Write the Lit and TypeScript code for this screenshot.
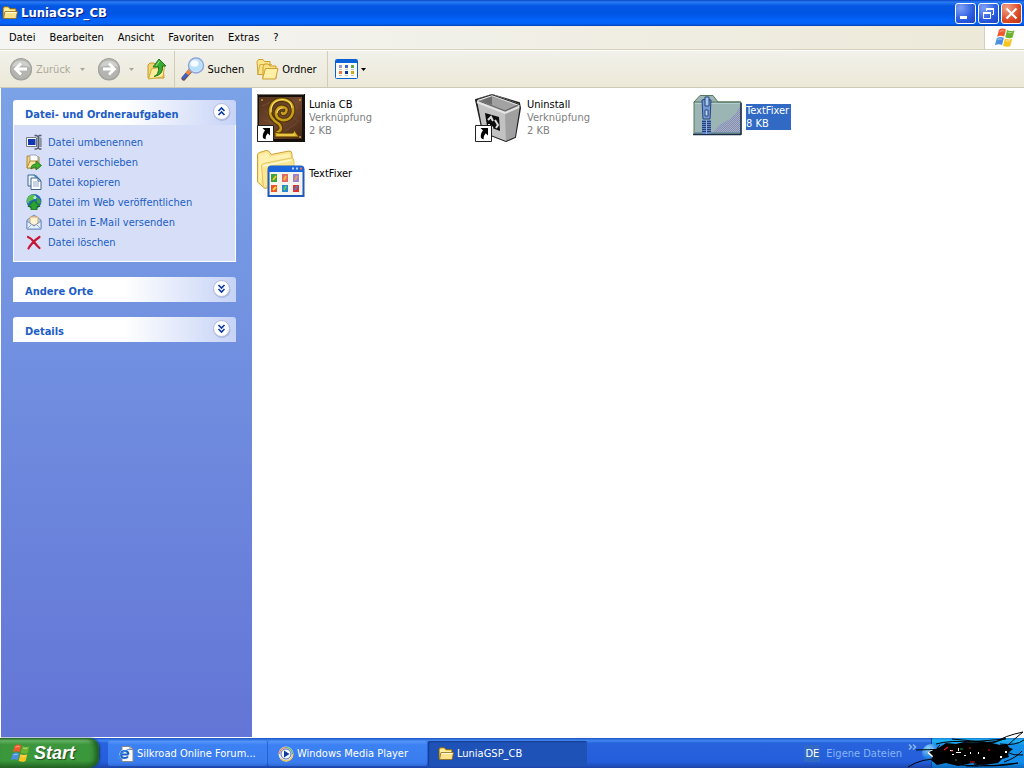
import { LitElement, html, css, svg, nothing } from "lit";
import { customElement, property, state } from "lit/decorators.js";
import { classMap } from "lit/directives/class-map.js";

const pic = (w: number, h: number, body: unknown, vb = `0 0 ${w} ${h}`) =>
  html`<svg width=${w} height=${h} viewBox=${vb} aria-hidden="true">${body}</svg>`;

const folder = () => pic(16, 16, svg`
  <path d="M1 3.500q0-2 2-2h3l2 2h5q1 0 1 1V13H1z" fill="#f0c850" stroke="#7d5f18" stroke-width=".8"/>
  <path d="M2 4.500q0-1.500 1.500-1.500H6l2 2h5v2H2z" fill="#fff0a0"/>
  <path d="M3 6.500h12.500L14 13.500H1.500z" fill="#fbe18a" stroke="#8f6c1c" stroke-width=".8"/>
  <path d="M3.500 7.500h11" stroke="#fffbe0"/>`);

const flag = (s: number) => pic(s, s, svg`
  <path d="M4.500 2.500q3-2 6.300-.3L9.200 8.700q-3-1.600-6.400.2z" fill="#f0592a"/>
  <path d="M11.800 2.800q3 1.800 6.700.1l-1.700 6.500q-3.400 1.600-6.600-.1z" fill="#6ab52d"/>
  <path d="M2.500 10.100q3.300-1.900 6.400-.2l-1.600 6.400q-3.200-1.700-6.500.2z" fill="#4a8fe0"/>
  <path d="M9.900 10.500q3.200 1.700 6.600.1l-1.700 6.500q-3.300 1.700-6.600-.2z" fill="#f8c520"/>
  <path d="M5.200 4q2-1 4-.4M12.400 4.700q2 .8 4.100.1M3.300 11.400q2-1 4-.4M10.600 12.100q2 .8 4 .1" stroke="#fff" stroke-opacity=".45" fill="none"/>`, "0 0 19 19");

const arrowDisc = (dir: "l" | "r") => pic(24, 24, svg`
  <circle cx="12" cy="12.500" r="11" fill="#9c9c98"/>
  <circle cx="12" cy="12" r="10.500" fill="#b4b4b0" stroke="#a3a39f"/>
  <path d="M3 10a9.500 9.500 0 0 1 18 0q-9-3-18 0z" fill="#cfcfcc"/>
  <path d=${dir === "l" ? "M12 6.500L6.500 12l5.500 5.500M7 12h11" : "M12 6.500l5.500 5.500-5.500 5.500M17 12H6"}
    fill="none" stroke="#fff" stroke-width="2.800"/>`);

const caret = () => pic(5, 3, svg`<path d="M0 0h5L2.500 3z" fill="currentColor"/>`);

const upFolder = () => pic(20, 22, svg`
  <path d="M1 7l2-2h4l2 2h7l1 13H1z" fill="#f3d473" stroke="#c69a2c"/>
  <path d="M1.500 21l3-10 13-3-1.500 11z" fill="#fdeb9c" stroke="#d2a93a"/>
  <path d="M7 18.500q5-1.500 4.500-9.500H6L12 1l7 7h-3.500q1 9-8.500 10.500z" fill="#3aa935" stroke="#1d7a20"/>
  <path d="M9 8l3.500-5" stroke="#9be48a" fill="none"/>`);

const magnifier = () => pic(24, 24, svg`
  <path d="M2.500 21.500l7-8" stroke="#7e4a3c" stroke-width="4.200" stroke-linecap="round"/>
  <path d="M2.500 21l6-7" stroke="#3b63c8" stroke-width="3" stroke-linecap="round"/>
  <path d="M6 17l3.500-4" stroke="#f08a3c" stroke-width="3.500"/>
  <circle cx="15" cy="8.500" r="7.500" fill="#cfeafc" stroke="#8fa6dc" stroke-width="1.500"/>
  <circle cx="15" cy="8.500" r="6" fill="#b9e0fb"/>
  <ellipse cx="13.500" cy="6.500" rx="4" ry="3.300" fill="#fff" opacity=".85"/>`);

const folders = () => pic(23, 22, svg`
  <path d="M1 3.500l1.500-2H7l1.500 2H14v13H2z" fill="#fbe48a" stroke="#cf9f2f"/>
  <path d="M1.500 17L4 6.500h12" fill="none" stroke="#d8ae3f"/>
  <path d="M7 8.500L8.500 6H12l2 2h6v12.500H7z" fill="#fae07e" stroke="#cf9f2f"/>
  <path d="M6.500 21l3-10.500h12.500L19.500 21z" fill="#fff0a6" stroke="#cf9f2f"/>`);

const viewsIcon = () => pic(23, 20, svg`
  <rect x=".5" y=".5" width="22" height="19" rx="1" fill="#fffdf3" stroke="#0a5fd0"/>
  <path d="M1 1h21v3H1z" fill="#0c62d9"/>
  <path d="M4 6h3v3H4z" fill="#9b95c9"/><path d="M10 6h3v3h-3z" fill="#3167cf"/><path d="M16 6h3v3h-3z" fill="#5aa85a"/>
  <path d="M4 12h3v3H4z" fill="#ee7351"/><path d="M10 12h3v3h-3z" fill="#12329b"/><path d="M16 12h3v3h-3z" fill="#d0a41c"/>
  <path d="M4 16.500h3M10 16.500h3M16 16.500h3M4 10.500h3M10 10.500h3M16 10.500h3" stroke="#c4c4cc"/>`);

const taskIcons = {
  rename: () => pic(16, 16, svg`
    <path d="M.5 3.500h10v9H.5z" fill="#fff" stroke="#747b8c"/><path d="M2 5h7.500v6H2z" fill="#1238ae"/>
    <path d="M10 3h5v10h-5z" fill="#aab0bd"/>
    <path d="M8.500 1.500h2l1.500 1 1.500-1h2M12.500 2.500v11M8.500 15h2l1.500-1 1.500 1h2" fill="none" stroke="#555e70" stroke-width="1.500"/>
    <path d="M15 4v9M10.500 4v9" stroke="#6b7385"/>`),
  move: () => pic(16, 16, svg`
    <path d="M1 2h4l1 1h7v11H1z" fill="#f0cf74" stroke="#b38a35"/><path d="M4 1h6l2 2v7H4z" fill="#fff" stroke="#9aa4bb"/>
    <path d="M1 14l3-7h8l-2 7z" fill="#fbe6a0" stroke="#b38a35"/>
    <path d="M5 15q0-5 5-5V7l5.500 4.500L10 16v-3q-3 0-5 2z" fill="#3fae2e" stroke="#1c6e1c" stroke-width=".8"/>`),
  copy: () => pic(16, 16, svg`
    <path d="M2 1h7l3 3v8H2z" fill="#e9f3fc" stroke="#41648c"/><path d="M7 1h3l5 5h-3z" fill="#3f86b4"/>
    <path d="M5 4h7l3 3v8.500H5z" fill="#fff" stroke="#41648c"/>
    <path d="M7 8h6M7 10h6M7 12h6" stroke="#90a9cb"/><path d="M12 4v3h3" fill="none" stroke="#41648c"/>`),
  web: () => pic(16, 16, svg`
    <circle cx="8" cy="7.500" r="7.500" fill="#2069c4"/><path d="M3 2q5-3 7 0 0 3-4 4-3 1-4 4-3-4 1-8z" fill="#5bbf4a"/>
    <path d="M11 3q4 2 4 6l-3 1q-2-2-1-7z" fill="#3ea13c"/><circle cx="9" cy="3.500" r="1.500" fill="#bff0e4"/>
    <path d="M8 6.500l6 6h-3V16H5v-3.500H2z" fill="#2ba32e" stroke="#126316" stroke-width=".8"/>`),
  mail: () => pic(16, 16, svg`
    <path d="M1 6l7-5 7 5v9H1z" fill="#b8cdec" stroke="#6f8fc0"/><path d="M4 3h8v8H4z" fill="#fff4d6" stroke="#d8a75b"/>
    <path d="M1 7l7 5 7-5v8H1z" fill="#e6effb" stroke="#6f8fc0"/><path d="M1 15l5-5M15 15l-5-5" stroke="#8ba7d3"/>`),
  del: () => pic(16, 16, svg`
    <path d="M2 3Q5 4 8 8t5.500 6M13.500 3Q9 6 6 9.500T2.500 14.500" fill="none" stroke="#c81432" stroke-width="2.200" stroke-linecap="round"/>`),
};

const shortcut = () => svg`
  <path d="M.5 31.500h16v16H.5z" fill="#fff" stroke="#222"/>
  <path d="M5.500 34H13v7.500l-2.300-2.300Q8 42 8.500 45.500L6 44q-1-4 2-7.500z" fill="#000"/>`;

const fileIcons = {
  lunia: () => pic(48, 48, svg`
    <defs><linearGradient id="wood" x2="1" y2="1"><stop offset="0" stop-color="#54321c"/><stop offset=".5" stop-color="#74492e"/><stop offset="1" stop-color="#442717"/></linearGradient></defs>
    <path d="M0 0h48v48H0z" fill="#17100a"/><path d="M.5 47V.5H47" stroke="#777" fill="none"/><path d="M2 3h43v42H2z" fill="url(#wood)"/>
    <path d="M5 12l9-4m16 0l11 6M7 26l10 3m19-6l6 5M28 37l12-8M8 17l6 5" stroke="#87603e" opacity=".5"/>
    <g fill="none" stroke-linecap="round">
      <path d="M19 39q8-3 3-9Q12 24 13 16 15 5 26 5.500 37 7 36 18q-2 9-11 8-7-2-6-8 2-6 7-5 5 1 3 5-2 3-4 1" stroke="#4c3304" stroke-width="4.600"/>
      <path d="M19 39q8-3 3-9Q12 24 13 16 15 5 26 5.500 37 7 36 18q-2 9-11 8-7-2-6-8 2-6 7-5 5 1 3 5-2 3-4 1" stroke="#c89c18" stroke-width="2.600"/>
      <path d="M14 18Q14 6 26 5.500q8 1 9 8M20 19q1-5 6-5" stroke="#f7e26a" stroke-width="1.200"/>
    </g>
    <path d="M18 38l4 1h14l1-3 5 7H18z" fill="#d8ae22" stroke="#5a3d04"/><path d="M20 41h18" stroke="#f7e26a"/>
    <circle cx="5" cy="6" r="1" fill="#c79a55"/><circle cx="43" cy="6" r="1" fill="#c79a55"/><circle cx="43" cy="43" r="1" fill="#c79a55"/>
    ${shortcut()}`),
  bin: () => pic(48, 48, svg`
    <path d="M1 6l16-5 27 8 1 5-5 29-9 4-23-9z" fill="#b4b4b4" stroke="#222" stroke-width="2"/>
    <path d="M2 6l15-5 28 10-15 6z" fill="#8a8a8a"/>
    <path d="M6 7l11-5v9z" fill="#6d6d6d"/><path d="M17 2v9l13 5 12-5z" fill="#a2a2a2"/>
    <path d="M2 6l28 11 1 30-23-9z" fill="#c2c2c2"/><path d="M30 17l15-6-5 32-9 4z" fill="#a0a0a0"/>
    <path d="M2 8l28 11 14-6M3 6l14-5 27 10" stroke="#e4e4e4" stroke-width="2" fill="none"/>
    <path d="M4 7l26 10 13-6" stroke="#444" stroke-width=".7" fill="none"/>
    <path d="M2 5.500L17 .7l28 10" stroke="#222" fill="none"/>
    <path d="M10 19l14 4 1 14-13-5z" fill="#0c0c0c"/>
    <path d="M13 26l3-3 2 4m2-1l3 5-2 3m-7-4v2l4 2" fill="none" stroke="#ddd" stroke-width="2"/>
    ${shortcut()}`),
  zip: () => pic(49, 44, svg`
    <defs><pattern id="dots" width="2" height="2" patternUnits="userSpaceOnUse"><path d="M0 0h1v1H0zM1 1h1v1H1z" fill="#9088c4"/></pattern></defs>
    <path d="M1 8l6-6.500h13L25 8h23v32H1z" fill="#9ab5b4" stroke="#587a60"/>
    <path d="M1 8h47" stroke="#54795b"/><path d="M2 9.500h45" stroke="#b4cdd4"/>
    <path d="M47 12v27H20q4-8 12-11 10-5 15-16z" fill="url(#dots)"/>
    <path d="M0 40.500h48M48 9v32" stroke="#1b2c48" stroke-width="1.500"/><path d="M2 38.500h45" stroke="#7290a8"/>
    <path d="M9 26h9v14H9z" fill="#6486c2"/><path d="M9 27.500h9M9 29.500h9M9 31.500h9M9 33.500h9M9 35.500h9M9 37.500h9" stroke="#23417b"/><path d="M13.500 26v14" stroke="#9ab5d9"/>
    <path d="M9 6q4-2 9 0l-1 19H10z" fill="#7699d4" stroke="#24447e"/>
    <path d="M12 3h4v9h-4z" fill="#a9c5ec" stroke="#24447e"/><path d="M12 16h3v6h-3z" fill="#c2daf0" stroke="#24447e"/>`),
  folder: () => pic(48, 48, svg`
    <path d="M.5 32V5q0-2 2-2.500L9 .5q2-.5 4 2l1 2 18-3.500q3 0 3 3V30L8 38.500z" fill="#fbe48c" stroke="#cfa238"/>
    <path d="M2 6q0-1.500 2-2l6-1.500 3 4 18-3q2.500 0 2.500 2.500v4L6 15 4 33l-2-1z" fill="#fff1b0"/>
    <path d="M6.500 38L4.500 16q0-2 2-2.500L34 8q3 0 3 3v22z" fill="#fce792" stroke="#e6c464"/>
    <path d="M6 16l28-6" stroke="#fffbd8" stroke-width="1.500"/>
    <path d="M11.500 19.500q0-3 3-3h29q3 0 3 3V46h-35z" fill="#f4f4ee" stroke="#1e58b8" stroke-width="2"/>
    <path d="M11 22v-3q0-3 3-3h30q3 0 3 3v3z" fill="#1c66dc"/><path d="M35 18.500h2M39 18.500h2" stroke="#bcd7ff" stroke-width="2"/><path d="M43 18.500h2" stroke="#ff6a42" stroke-width="2"/>
    <path d="M14 24h6v8h-6z" fill="#3ba33d"/><path d="M25 24h6v8h-6z" fill="#e26767"/><path d="M36 24h6v8h-6z" fill="#9a83cf"/>
    <path d="M14 35h6v7h-6z" fill="#f0502c"/><path d="M25 35h6v7h-6z" fill="#2c86d4"/><path d="M36 35h6v7h-6z" fill="#e03428"/>
    <path d="M16 30l3-4M27 30l2-4" stroke="#f4c52c" stroke-width="1.800"/><path d="M38 30l2-4" stroke="#f0a050" stroke-width="1.800"/>
    <path d="M16 40l3-3" stroke="#ffd83c" stroke-width="2"/><path d="M27 40l2-4" stroke="#5fd04c" stroke-width="2"/><path d="M38 40l2-4" stroke="#3c84e0" stroke-width="2"/>`),
};

const ieIcon = () => pic(16, 16, svg`
  <path d="M4 .5h8l3 3v12H4z" fill="#fff" stroke="#888"/><path d="M12 .5v3h3" fill="none" stroke="#888"/>
  <circle cx="6.500" cy="8.500" r="5" fill="#fff"/>
  <path d="M10.500 8.500H3q0 3.500 3.500 3.500 2.500 0 3.500-1.500M3 8.500Q3 5 6.700 5t3.800 3.500" fill="none" stroke="#1e5fc6" stroke-width="2"/>
  <path d="M1 13.500q-1-4 5-8 5-3 6-1.500" fill="none" stroke="#3a90e6" stroke-width="1.200"/>`);

const wmpIcon = () => pic(16, 16, svg`
  <circle cx="8" cy="8" r="7.500" fill="#e8eefa"/><path d="M8 1.500A6.500 6.500 0 0 1 14.500 8" stroke="#5bb04a" stroke-width="1.200" fill="none"/>
  <path d="M1.500 8A6.500 6.500 0 0 1 8 1.500" stroke="#ef7b34" stroke-width="1.200" fill="none"/><path d="M14.500 8A6.500 6.500 0 0 1 3 12.500" stroke="#f3c341" stroke-width="1.200" fill="none"/>
  <circle cx="8" cy="8" r="5" fill="#f4f8ff" stroke="#5472b4"/><path d="M6 4.500L11.500 8 6 11.500z" fill="#123c9c"/>`);

const chevrons = (up: boolean) => pic(19, 19, svg`
  <circle cx="10" cy="10.500" r="8.500" fill="#8b98ca" opacity=".5"/>
  <circle cx="9.500" cy="9.500" r="8" fill="#fff" stroke="#b3bbdc"/>
  <path d=${up ? "M6.500 9l3-3 3 3M6.500 13l3-3 3 3" : "M6.500 6l3 3 3-3M6.500 10l3 3 3-3"} fill="none" stroke="#0a3aa6" stroke-width="1.600"/>`);

const scribble = () => html`<svg class="ink" width="116" height="38" viewBox="0 0 116 38" aria-hidden="true">
  <path d="M32 17l6-4 10 1 8-2 14 1 10-1 12 3 6-1 4 4 3 1-5 4 1 4-7 2-4 4-14 2-12-2-14 3-12-3-9 2-6-5 2-4-4-4z" fill="#000"/>
  <path d="M0 37q14-9 32-8M8 20q18-1 36 0M28 14q14-4 38-2 22 2 32-4M115 2Q96 6 88 12q-10 2-22 1M115 2q-10 8-16 14M92 14q16 2 24-4M44 9q20 2 34 3M36 32q18 4 34 4M66 34q22 4 44-1M96 32q12-4 18-11M98 22q8 4 17 3M32 15q-6 4 2 8M30 29q6 4 18 4M60 12l38-3M110 33q-26 4-52 3"
    fill="none" stroke="#000"/>
  <path d="M42 20h3v1h-3zM44 24h2v1h-2zM48 22h5v1h-5zM50 18h1v3h-1zM56 25h2v1h-2zM70 22h1v2h-1zM97 21h2v2h-2zM92 26h2v2h-2zM75 27h2v2h-2zM62 22h1v2h-1z" fill="#fff"/>
  <path d="M36 20l4-3M43 21h2M61 18h2M62 32h5M80 20h2" stroke="#e81818" stroke-width="1.200"/>
  <path d="M47 30h2M52 19h3" stroke="#169a38"/>
</svg>`;

const minGlyph = () => pic(13, 13, svg`<path d="M1 9h7v3H1z" fill="#fff"/>`);
const restoreGlyph = () => pic(13, 13, svg`
  <path d="M4.500 4V1.500h7v6H10" fill="none" stroke="#fff"/><path d="M4 2h8" stroke="#fff" stroke-width="2"/>
  <path d="M1.500 6h7v5.500h-7z" fill="none" stroke="#fff"/><path d="M1 6h8" stroke="#fff" stroke-width="2"/>`);
const closeGlyph = () => pic(13, 13, svg`<path d="M1.500 1.500l10 10m0-10l-10 10" stroke="#fff" stroke-width="2.200"/>`);
const moreGlyph = () => pic(9, 6, svg`<path d="M1 .5L3.500 3 1 5.500M5 .5L7.500 3 5 5.500" fill="none" stroke="currentColor" stroke-width="1.500"/>`);
const leftGlyph = () => pic(8, 10, svg`<path d="M6.500 1L2 5l4.500 4" fill="none" stroke="#fff" stroke-width="2"/>`);

@customElement("task-box")
class TaskBox extends LitElement {
  @property() heading = "";
  @property({ type: Boolean }) open = false;
  static styles = css`
    :host { display: block; }
    * { box-sizing: border-box; }
    .head {
      display: flex; align-items: center; justify-content: space-between;
      width: 100%; height: 25px; margin: 0; padding: 0 5px 0 12px; border: 0;
      border-radius: 3px 3px 0 0; background: linear-gradient(90deg, #fff 50%, #c6d3f7);
      font: bold 11px/14px "DejaVu Sans Condensed", "DejaVu Sans", sans-serif; color: #215dc6; text-align: left;
    }
    .title { padding-top: 4px; }
    .body { padding: 9px 12px 11px; border: 1px solid #fff; border-top: 0; background: #d6dff7; }
    svg { display: block; margin-bottom: 2px; }
  `;
  render() {
    return html`<section>
      <button class="head" aria-expanded=${this.open ? "true" : "false"} @click=${() => (this.open = !this.open)}>
        <span class="title">${this.heading}</span>${chevrons(this.open)}
      </button>
      ${this.open ? html`<div class="body"><slot></slot></div>` : nothing}
    </section>`;
  }
}

interface Entry { name: string; kind?: string; size?: string; icon: () => unknown; }

@customElement("app-root")
class AppRoot extends LitElement {
  @state() private selected = 2;

  private entries: Entry[] = [
    { name: "Lunia CB", kind: "Verknüpfung", size: "2 KB", icon: fileIcons.lunia },
    { name: "Uninstall", kind: "Verknüpfung", size: "2 KB", icon: fileIcons.bin },
    { name: "TextFixer", size: "8 KB", icon: fileIcons.zip },
    { name: "TextFixer", icon: fileIcons.folder },
  ];
  private tasks: [string, () => unknown][] = [
    ["Datei umbenennen", taskIcons.rename],
    ["Datei verschieben", taskIcons.move],
    ["Datei kopieren", taskIcons.copy],
    ["Datei im Web veröffentlichen", taskIcons.web],
    ["Datei in E-Mail versenden", taskIcons.mail],
    ["Datei löschen", taskIcons.del],
  ];
  private windows: [string, () => unknown][] = [
    ["Silkroad Online Forum...", ieIcon],
    ["Windows Media Player", wmpIcon],
    ["LuniaGSP_CB", folder],
  ];

  static styles = css`
    :host {
      display: flex; flex-direction: column; height: 100vh; overflow: hidden; background: #fff;
      font: 11px/13px "DejaVu Sans Condensed", "DejaVu Sans", sans-serif; color: #000; cursor: default;
    }
    * { box-sizing: border-box; }
    svg { display: block; flex: none; }
    button { font: inherit; color: inherit; margin: 0; padding: 0; border: 0; background: none; white-space: nowrap; }
    .titlebar {
      display: flex; align-items: center; gap: 3px; flex: none; height: 26px; padding: 0 2px;
      background: linear-gradient(#0a46c8, #2a7cf4 8%, #0458e4 22%, #0054e3 50%, #0264fc 80%, #0262f5 92%, #0340b0);
    }
    .titlebar h1 {
      flex: 1; margin: 0; color: #fff; text-shadow: 1px 1px #0a1883;
      font: bold 13px/18px "DejaVu Sans Condensed", "DejaVu Sans", sans-serif;
    }
    .winbtns { display: flex; gap: 2px; }
    .winbtn {
      display: grid; place-items: center; width: 21px; height: 21px; border: 1px solid #fff; border-radius: 3px;
      background: radial-gradient(circle at 25% 20%, #7ea0f5, #2a5be0 60%, #1c44c0);
    }
    .winbtn.close { background: radial-gradient(circle at 25% 20%, #f0a088, #dc4a26 60%, #b8320f); }
    .menubar { display: flex; flex: none; height: 24px; background: linear-gradient(90deg, #f5f5f4, #ece9d8); }
    .menus { display: flex; flex: 1; padding: 0 2px; border-bottom: 1px solid #d8d2bd; }
    .menus button { padding: 0 7px 1px; }
    .brand { display: grid; place-items: center; width: 40px; border-left: 1px solid #d8d2bd; border-bottom: 1px solid #d8d2bd; background: #fff; }
    .toolbar {
      display: flex; align-items: center; flex: none; height: 38px; padding-left: 9px;
      background: linear-gradient(#f2f1ea, #ece9d8); border-bottom: 1px solid #cdc9b5; border-top: 1px solid #fff;
    }
    .tool { display: flex; align-items: center; gap: 3px; height: 36px; padding: 0 6px; }
    .back { padding: 0; }
    .back svg:last-child { margin-left: 6px; }
    .forward { gap: 8px; padding: 0 7px 0 12px; }
    .up { padding: 0 7px 0 6px; }
    .list { padding-right: 10px; }
    .views { padding: 0 7px; }
    .off { color: #aca899; }
    .sep { width: 1px; height: 36px; background: #d2cdb6; }
    .main { display: flex; flex: 1; min-height: 0; padding: 0 0 1px 1px; }
    .side {
      display: flex; flex-direction: column; gap: 15px; flex: none; width: 251px; padding: 12px 16px 12px 12px;
      background: linear-gradient(#7ba2e7, #6375d6);
    }
    .tasks { display: grid; gap: 4px; margin: 0; padding: 0; list-style: none; }
    .tasks a { display: flex; align-items: center; gap: 6px; height: 16px; color: #215dc6; text-decoration: none; white-space: nowrap; }
    .files {
      display: grid; flex: 1; align-content: start; grid-template-columns: repeat(auto-fill, 218px);
      grid-auto-rows: 48px; row-gap: 8px; padding: 6px 5px;
    }
    .file { display: flex; align-items: center; gap: 4px; text-align: left; }
    .file.on svg { align-self: flex-start; }
    .dim { color: #808080; }
    .label { display: flex; flex-direction: column; margin-bottom: 2px; padding-right: 2px; }
    .on .label, .on .dim { background: #316ac5; color: #fff; }
    .taskbar {
      display: flex; flex: none; height: 30px; color: #fff;
      background: linear-gradient(#1f4fc0, #3f86f0 8%, #2862dc 18%, #245edb 80%, #1c44a8);
    }
    .start {
      display: flex; align-items: center; gap: 4px; width: 99px; padding-left: 10px; border-radius: 0 10px 10px 0;
      background: linear-gradient(#2b6b2b, #6bb96b 8%, #3c963c 22%, #3a983a 75%, #276627);
      box-shadow: inset -4px 0 5px #1f5d20, 1px 0 2px #163a88;
      font: italic bold 18px/22px "Liberation Sans", sans-serif; text-shadow: 1px 1px 1px #1b4a1b;
    }
    .tabs { display: flex; flex: 1; gap: 1px; padding: 3px 0 2px 9px; }
    .tab {
      display: flex; align-items: center; gap: 3px; width: 159px; padding: 0 10px; border-radius: 2px;
      background: linear-gradient(#5a96f8, #3c81f3 15%, #3a7cee 85%, #2f6bd6);
    }
    .tab.active { background: #1e52b7; box-shadow: inset 1px 1px 1px #153c8c; }
    .lang { align-self: center; padding: 2px 1px; background: #316ac5; }
    .desk { align-self: center; margin: 0 6px; color: #86b6f7; }
    .more { align-self: flex-start; padding-top: 6px; color: #86b6f7; }
    .tray {
      position: relative; display: flex; align-items: center; width: 93px; margin-left: 14px;
      border-left: 1px solid #0c3f9c; background: linear-gradient(#1a7fd8, #20b4f4 8%, #1290e8 25%, #0f8dea 80%, #0c68b8);
    }
    .expand {
      display: grid; place-items: center; width: 18px; height: 18px; margin-left: -10px; border-radius: 50%;
      background: radial-gradient(circle at 35% 25%, #8fd4fb, #1273dd 60%, #0a4fb8);
    }
    .ink { position: absolute; right: 0; bottom: 0; pointer-events: none; }
  `;

  private file(e: Entry, i: number) {
    const on = i === this.selected;
    return html`<button class=${classMap({ file: true, on })} aria-pressed=${on ? "true" : "false"}
        @click=${() => (this.selected = i)}>
      ${e.icon()}
      <span class="label">
        <span>${e.name}</span>
        ${e.kind ? html`<span class="dim">${e.kind}</span>` : nothing}
        ${e.size ? html`<span class="dim">${e.size}</span>` : nothing}
      </span>
    </button>`;
  }

  render() {
    return html`
      <header class="titlebar">
        ${folder()}
        <h1>LuniaGSP_CB</h1>
        <div class="winbtns">
          <button class="winbtn" aria-label="Minimieren">${minGlyph()}</button>
          <button class="winbtn" aria-label="Wiederherstellen">${restoreGlyph()}</button>
          <button class="winbtn close" aria-label="Schließen">${closeGlyph()}</button>
        </div>
      </header>
      <div class="menubar">
        <nav class="menus" aria-label="Menü">
          ${["Datei", "Bearbeiten", "Ansicht", "Favoriten", "Extras", "?"].map((m) => html`<button>${m}</button>`)}
        </nav>
        <div class="brand">${flag(21)}</div>
      </div>
      <div class="toolbar" role="toolbar">
        <button class="tool back off" disabled>${arrowDisc("l")}<span>Zurück</span>${caret()}</button>
        <button class="tool forward off" disabled aria-label="Vorwärts">${arrowDisc("r")}${caret()}</button>
        <button class="tool up" aria-label="Aufwärts">${upFolder()}</button>
        <span class="sep"></span>
        <button class="tool">${magnifier()}<span>Suchen</span></button>
        <button class="tool list">${folders()}<span>Ordner</span></button>
        <span class="sep"></span>
        <button class="tool views" aria-label="Ansichten">${viewsIcon()}${caret()}</button>
      </div>
      <main class="main">
        <aside class="side">
          <task-box heading="Datei- und Ordneraufgaben" open>
            <ul class="tasks">
              ${this.tasks.map(([label, icon]) => html`<li><a href="#">${icon()}<span>${label}</span></a></li>`)}
            </ul>
          </task-box>
          <task-box heading="Andere Orte"></task-box>
          <task-box heading="Details"></task-box>
        </aside>
        <section class="files" aria-label="Dateien">${this.entries.map((e, i) => this.file(e, i))}</section>
      </main>
      <footer class="taskbar">
        <button class="start">${flag(20)}<span>Start</span></button>
        <div class="tabs">
          ${this.windows.map(([label, icon]) => html`
            <button class=${classMap({ tab: true, active: label === "LuniaGSP_CB" })}>${icon()}<span>${label}</span></button>`)}
        </div>
        <span class="lang">DE</span>
        <span class="desk">Eigene Dateien</span>
        <button class="more" aria-label="Mehr">${moreGlyph()}</button>
        <div class="tray">
          <button class="expand" aria-label="Ausgeblendete Symbole einblenden">${leftGlyph()}</button>
          ${scribble()}
        </div>
      </footer>
    `;
  }
}
